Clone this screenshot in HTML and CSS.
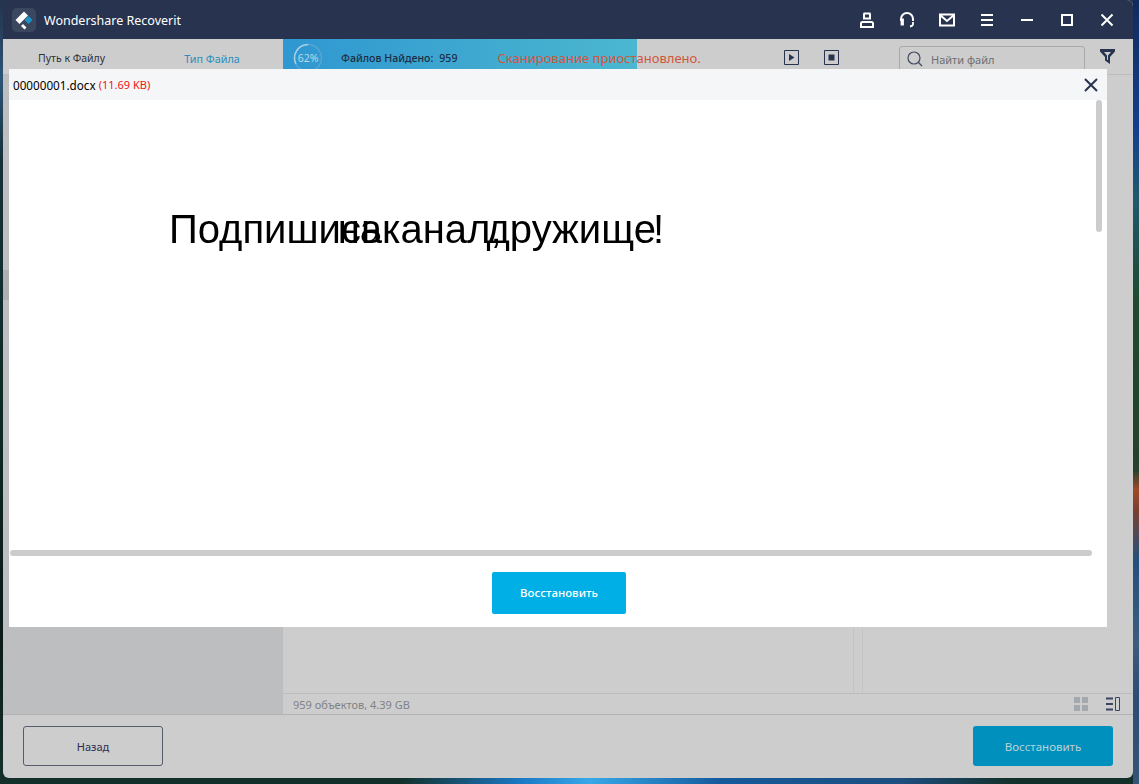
FILE: index.html
```html
<!DOCTYPE html>
<html>
<head lang="ru">
<meta charset="UTF-8">
<title>Wondershare Recoverit</title>
<link rel="stylesheet" href="styles.css">
</head>
<body>
<div class="window">
    <div class="titlebar">
        <div class="logo">
            <svg width="24" height="24" viewBox="0 0 24 24">
                <path d="M12 3.500l4 4-8.500 8.500-4-4z" fill="#fff"/>
                <path d="M16.500 8l4 4-4 4-4-4z" fill="#1f93c4"/>
                <path d="M11 16l3.500 3.500-2 2-3.500-3.500z" fill="#fff"/>
            </svg>
        </div>
        <span class="app_name">Wondershare Recoverit</span>
        <div class="win_icons">
            <svg class="win_icon" viewBox="0 0 16 16" fill="none" stroke="#fff" stroke-width="2">
                <path d="M4.500 1.500h7M5 1.500v5h6v-5"/>
                <path d="M2 15v-3.500q0-1.500 1.500-1.500h9q1.500 0 1.500 1.500v3.500z"/>
            </svg>
            <svg class="win_icon" viewBox="0 0 16 16" fill="none" stroke="#fff" stroke-width="2">
                <path d="M2 9V7a6 6 0 0 1 12 0v2"/>
                <path d="M2.500 7.500h1.500v5h-1.500zM14 10v2q0 2-3 2.500" stroke-width="1.800"/>
            </svg>
            <svg class="win_icon" viewBox="0 0 16 16" fill="none" stroke="#fff" stroke-width="2">
                <path d="M1 2.500h14v11H1zM1 3l7 6 7-6"/>
            </svg>
            <svg class="win_icon" viewBox="0 0 16 16" fill="none" stroke="#fff" stroke-width="2">
                <path d="M2 3h12M2 8h12M2 13h12"/>
            </svg>
            <svg class="win_icon" viewBox="0 0 16 16" fill="none" stroke="#fff" stroke-width="2">
                <path d="M2 8h12"/>
            </svg>
            <svg class="win_icon" viewBox="0 0 16 16" fill="none" stroke="#fff" stroke-width="2">
                <path d="M3 3h10v10H3z"/>
            </svg>
            <svg class="win_icon" viewBox="0 0 16 16" fill="none" stroke="#fff" stroke-width="2">
                <path d="M2.500 2.500l11 11M13.500 2.500l-11 11"/>
            </svg>
        </div>
    </div>

    <div class="toolbar">
        <div class="tabs">
            <span class="tab">Путь к Файлу</span>
            <span class="tab tab_active">Тип Файла</span>
        </div>
        <div class="progress">
            <svg class="ring" width="30" height="30" viewBox="0 0 30 30" fill="none">
                <circle cx="15" cy="15" r="13.500" stroke="#55a6d3" stroke-width="1.500"/>
                <path d="M15 1.500A13.500 13.500 0 0 0 3 21" stroke="#a8cfe2" stroke-width="1.500"/>
                <text x="15" y="19" text-anchor="middle" class="ring_text">62%</text>
            </svg>
            <span class="found">Файлов Найдено:</span>
            <span class="found found_num">959</span>
            <span class="paused">Сканирование приостановлено.</span>
            <svg class="ctrl ctrl_play" width="15" height="15" viewBox="0 0 15 15">
                <path d="M.5.500h14v14H.5z" fill="none" stroke="#27334f"/>
                <path d="M5 4l5.500 3.500L5 11z" fill="#27334f"/>
            </svg>
            <svg class="ctrl ctrl_stop" width="15" height="15" viewBox="0 0 15 15">
                <path d="M.5.500h14v14H.5z" fill="none" stroke="#27334f"/>
                <path d="M4.500 4.500h6v6h-6z" fill="#27334f"/>
            </svg>
        </div>
        <div class="search">
            <svg width="16" height="16" viewBox="0 0 16 16" fill="none" stroke="#3f4a5e" stroke-width="1.200">
                <circle cx="7" cy="7" r="6"/>
                <path d="M11.500 11.500L15 15"/>
            </svg>
            <span>Найти файл</span>
        </div>
        <svg class="filter" width="15" height="15" viewBox="0 0 15 15">
            <path d="M0 0h15v2.500L10 8v7L5 11.500V8L0 2.500zM4 3l3 3.500v4l1 .8V6.500L11 3z" fill="#27334f" fill-rule="evenodd"/>
        </svg>
    </div>

    <div class="main">
        <div class="sidebar">
            <div class="side_row"></div>
        </div>
        <div class="content">
            <div class="columns">
                <div class="col_line"></div>
            </div>
            <div class="status">
                <span>959 объектов, 4.39 GB</span>
                <div class="view_icons">
                    <svg width="14" height="14" viewBox="0 0 14 14" fill="#a3a9ad">
                        <path d="M0 0h6v6H0zM8 0h6v6H8zM0 8h6v6H0zM8 8h6v6H8z"/>
                    </svg>
                    <svg width="14" height="14" viewBox="0 0 14 14" fill="none" stroke="#3c4560">
                        <path d="M0 1.500h7M0 7h7M0 12.500h7" stroke-width="2"/>
                        <path d="M9.500.500h4v13h-4z"/>
                    </svg>
                </div>
            </div>
        </div>
    </div>

    <div class="footer">
        <div class="btn btn_back">Назад</div>
        <div class="btn btn_restore">Восстановить</div>
    </div>
</div>

<!-- окно просмотра файла поверх главного окна -->
<div class="preview">
    <div class="preview_head">
        <span class="file_name">00000001.docx</span>
        <span class="file_size">(11.69 KB)</span>
        <svg class="preview_close" width="14" height="14" viewBox="0 0 14 14" fill="none" stroke="#27334f" stroke-width="2">
            <path d="M1 1l12 12M13 1L1 13"/>
        </svg>
    </div>
    <div class="preview_body">
        <div class="doc_line">
            <span class="w1">Подпишись</span><span class="w2">на</span><span class="w3">канал,</span><span class="w4">дружище</span><span class="w5">!</span>
        </div>
        <div class="vbar"></div>
        <div class="hbar"></div>
    </div>
    <div class="preview_foot">
        <div class="btn_recover">Восстановить</div>
    </div>
</div>
</body>
</html>
```

FILE: styles.css
```css
*{
    margin:0px;
    padding:0px;
    box-sizing:border-box;
}
html,body{
    width:100%;
    height:100%;
    overflow:hidden;
}
body{
    font-family:"Noto Sans","Open Sans",sans-serif;
    font-size:12px;
    position:relative;
    /* обои рабочего стола */
    background:
        linear-gradient(90deg,transparent 400px,#1a78c4 520px,#38a8e8 590px,#155a9c 720px,#1d4f80 900px,transparent 1010px) bottom left/100% 6px no-repeat,
        linear-gradient(180deg,#102a5c 0px,#15408e 130px,#1f5a6c 200px,#1e4a30 300px,#26402c 470px,#a04a28 490px,#7a4030 510px,#24507c 560px,#3c5c80 640px,#2d4c74 700px,#345478 784px) right top/6px 100% no-repeat,
        linear-gradient(180deg,#24344c 0px,#2c5478 80px,#163038 160px,#0e2a26 400px,#0a1a18 620px,#14302a 784px);
}

.window{
    width:1130px;
    height:778px;
    margin-left:3px;
    display:flex;
    flex-direction:column;
    background:#cdcdcd;
    border-radius:0 6px 6px 6px;
    overflow:hidden;
}

.titlebar{
    height:39px;
    flex:none;
    display:flex;
    align-items:center;
    padding-left:9px;
    background:#27334f;
}
.logo{
    width:24px;
    height:24px;
    border-radius:5px;
    background:#3b465f;
}
.app_name{
    margin:2px 0 0 8px;
    font-size:12.500px;
    color:#fff;
}
.win_icons{
    margin-left:auto;
    margin-right:18px;
    display:flex;
    gap:24px;
}
.win_icon{
    width:16px;
    height:16px;
}

.toolbar{
    height:36px;
    flex:none;
    display:flex;
    border-bottom:1px solid #bcbcbc;
}
.tabs{
    width:280px;
    flex:none;
    display:flex;
    padding:12px 0 0 35px;
    font-size:10.500px;
    color:#2d3138;
}
.tab_active{
    margin-left:79px;
    font-size:10.800px;
    color:#2a8dbd;
}
.progress{
    width:615px;
    flex:none;
    display:flex;
    align-items:center;
    height:30px;
    padding-left:10px;
    background:linear-gradient(90deg,#2f97d1,#4cb7cf) left top/354px 100% no-repeat;
}
.ring{
    flex:none;
    margin-top:7px;
}
.ring_text{
    font-size:10.500px;
    fill:#b9d8e8;
}
.found{
    margin:8px 0 0 18px;
    font-size:10.600px;
    font-weight:500;
    color:#1e2c44;
}
.found_num{
    margin-left:6px;
}
.paused{
    margin:7px 0 0 40px;
    font-size:13px;
    color:#d2563a;
    white-space:nowrap;
}
.ctrl{
    flex:none;
    margin-top:7px;
}
.ctrl_play{
    margin-left:83px;
}
.ctrl_stop{
    margin-left:25px;
}
.search{
    width:186px;
    height:26px;
    flex:none;
    margin:7px 0 0 1px;
    padding-left:7px;
    display:flex;
    align-items:center;
    gap:8px;
    border:1px solid #a9a9a9;
    border-radius:3px 3px 0 0;
    color:#6c6f74;
    font-size:11px;
}
.filter{
    margin:10px 0 0 15px;
}

.main{
    flex:1;
    display:flex;
    min-height:0;
}
.sidebar{
    width:279px;
    flex:none;
    padding-top:195px;
    background:#bdbebf;
}
.side_row{
    height:30px;
    background:#aeafb0;
}
.content{
    flex:1;
    display:flex;
    flex-direction:column;
    border-left:1px solid #bcbcbc;
}
.columns{
    flex:1;
    padding-left:570px;
}
.col_line{
    width:10px;
    height:100%;
    border-left:1px solid #c3c3c3;
    border-right:1px solid #c3c3c3;
}
.status{
    height:21px;
    flex:none;
    display:flex;
    align-items:center;
    padding:0 13px 0 10px;
    border-top:1px solid #bcbcbc;
    color:#7f8388;
    font-size:11px;
}
.view_icons{
    margin-left:auto;
    display:flex;
    gap:18px;
}

.footer{
    height:64px;
    flex:none;
    display:flex;
    justify-content:space-between;
    padding:11px 20px 0;
    border-top:1px solid #b2b2b2;
}
.btn{
    width:140px;
    height:40px;
    line-height:41px;
    text-align:center;
    border-radius:3px;
    font-size:11.500px;
}
.btn_back{
    border:1px solid #565b6e;
    line-height:39px;
    font-size:11px;
    color:#2c2b50;
}
.btn_restore{
    background:#0090bd;
    color:#bcd0d6;
}

.preview{
    position:absolute;
    left:9px;
    top:69px;
    width:1098px;
    height:558px;
    display:flex;
    flex-direction:column;
    background:#fff;
}
.preview_head{
    height:31px;
    flex:none;
    display:flex;
    align-items:center;
    gap:3px;
    padding-left:4px;
    background:#f5f6f8;
    font-size:11.700px;
}
.file_name{
    color:#000;
}
.file_size{
    font-size:11px;
    color:#f01414;
}
.preview_close{
    margin-left:auto;
    margin-right:9px;
}
.preview_body{
    flex:1;
    position:relative;
}
.doc_line{
    position:absolute;
    left:160px;
    top:104px;
    display:flex;
    font-family:"Liberation Sans",Arial,sans-serif;
    font-size:40px;
    line-height:50px;
    color:#000;
    white-space:nowrap;
    filter:blur(.4px);
}
/* слова в документе наезжают друг на друга */
.w2{
    margin-left:-44px;
}
.w4{
    margin-left:-15px;
}
.w5{
    margin-left:-3px;
}
.vbar{
    position:absolute;
    left:1087px;
    top:0px;
    width:6px;
    height:132px;
    border-radius:3px;
    background:#ccc;
}
.hbar{
    position:absolute;
    left:1px;
    top:450px;
    width:1082px;
    height:6px;
    border-radius:3px;
    background:#ccc;
}
.preview_foot{
    height:71px;
    flex:none;
    display:flex;
    justify-content:center;
    padding-left:2px;
}
.btn_recover{
    width:134px;
    height:42px;
    margin-top:16px;
    line-height:42px;
    text-align:center;
    border-radius:2px;
    background:#00afe6;
    color:#fff;
    font-size:11.500px;
    font-weight:500;
}
```
